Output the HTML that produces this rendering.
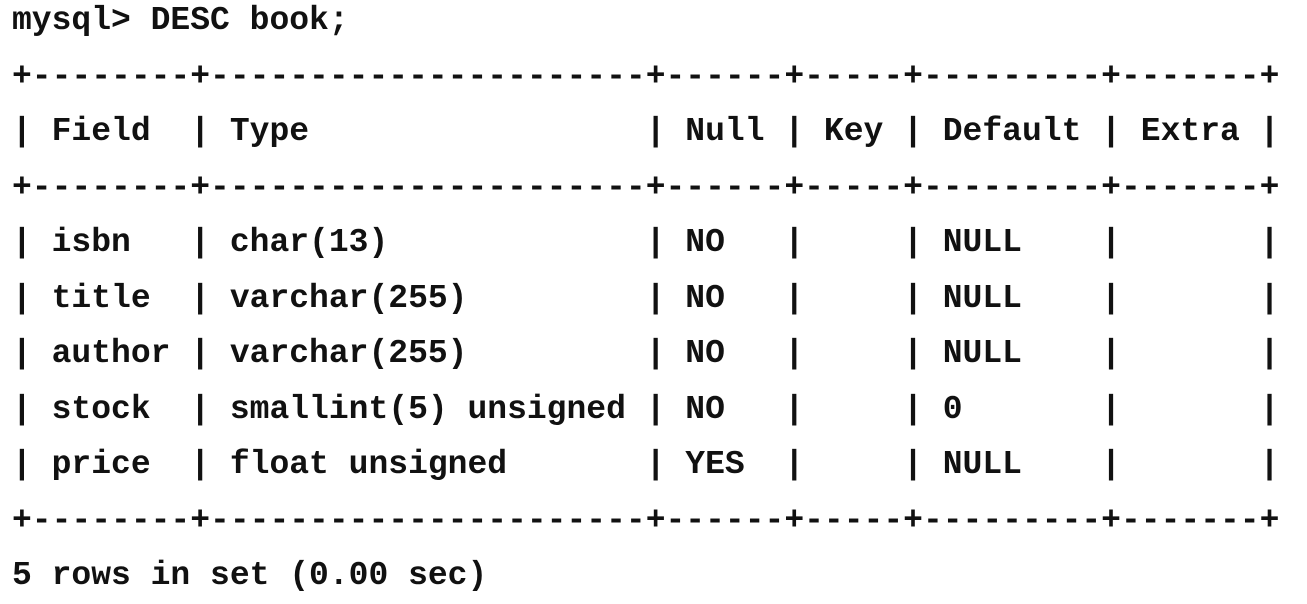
<!DOCTYPE html>
<html><head><meta charset="utf-8"><style>
html,body{margin:0;padding:0;background:#fff;width:1307px;height:595px;overflow:hidden}
pre{position:absolute;left:12px;top:-7px;margin:0;font-family:"Liberation Mono","Courier New",monospace;font-weight:bold;font-size:33px;line-height:55.5px;color:#111;letter-spacing:0}
</style></head><body><pre>mysql&gt; DESC book;
+--------+----------------------+------+-----+---------+-------+
| Field  | Type                 | Null | Key | Default | Extra |
+--------+----------------------+------+-----+---------+-------+
| isbn   | char(13)             | NO   |     | NULL    |       |
| title  | varchar(255)         | NO   |     | NULL    |       |
| author | varchar(255)         | NO   |     | NULL    |       |
| stock  | smallint(5) unsigned | NO   |     | 0       |       |
| price  | float unsigned       | YES  |     | NULL    |       |
+--------+----------------------+------+-----+---------+-------+
5 rows in set (0.00 sec)</pre></body></html>
